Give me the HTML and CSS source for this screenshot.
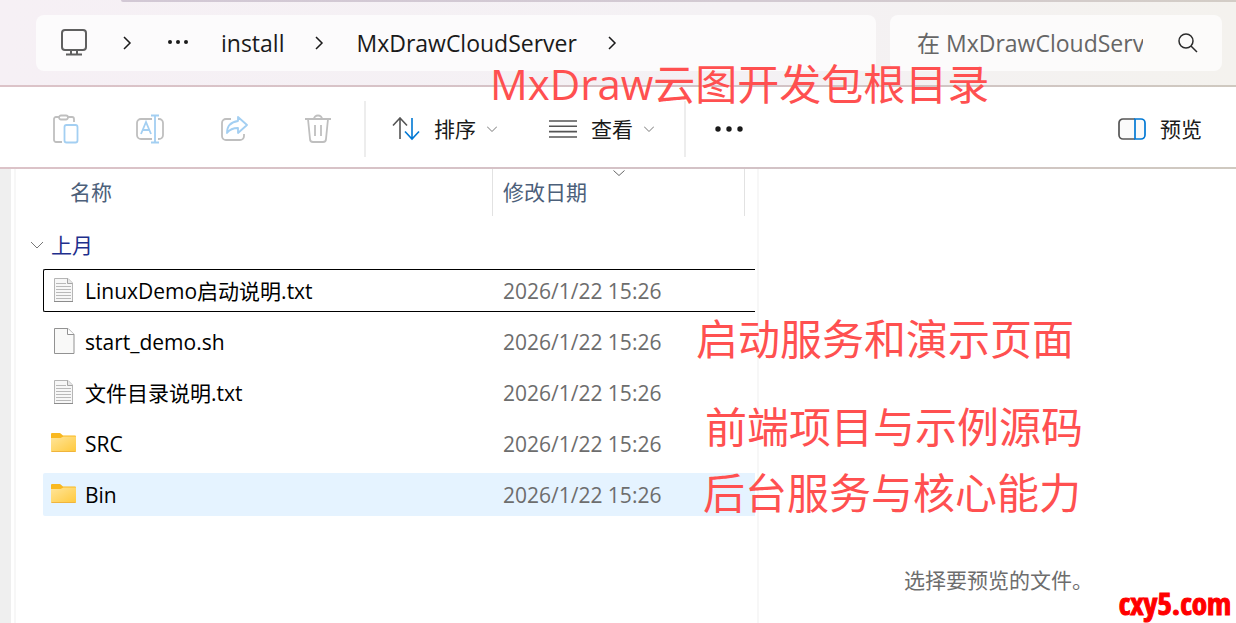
FILE: index.html
```html
<!DOCTYPE html>
<html lang="zh-CN">
<head>
    <meta charset="utf-8">
    <title>MxDrawCloudServer</title>
    <link rel="stylesheet" href="styles.css">
</head>
<body>

    <header class="address-bar">
        <div class="tab-line"></div>
        <nav class="path">
            <button class="pc" aria-label="此电脑">
                <svg width="28" height="28" viewBox="0 0 28 28" fill="none" stroke="#5f5f5f" stroke-width="2">
                    <rect x="2" y="1" width="24" height="20" rx="3"/>
                    <path d="M11 21v4M17 21v4M6 25.500h16"/>
                </svg>
            </button>
            <svg class="sep" width="10" height="16" viewBox="0 0 10 16"><path d="M2 2l6 6-6 6"/></svg>
            <button class="more-path" aria-label="更多">
                <svg width="20" height="8" viewBox="0 0 20 8" fill="#1a1a1a">
                    <circle cx="2" cy="3" r="2"/><circle cx="10" cy="3" r="2"/><circle cx="18" cy="3" r="2"/>
                </svg>
            </button>
            <a class="crumb" href="#">install</a>
            <svg class="sep" width="10" height="16" viewBox="0 0 10 16"><path d="M2 2l6 6-6 6"/></svg>
            <a class="crumb last" href="#">MxDrawCloudServer</a>
            <svg class="sep" width="10" height="16" viewBox="0 0 10 16"><path d="M2 2l6 6-6 6"/></svg>
        </nav>
        <div class="search">
            <input type="text" aria-label="搜索" placeholder="在 MxDrawCloudServer 中搜索">
            <button aria-label="搜索">
                <svg width="20" height="20" viewBox="0 0 20 20" fill="none" stroke="#2b2b2b" stroke-width="1.5">
                    <circle cx="8" cy="8" r="7"/><path d="M13 13l6 6"/>
                </svg>
            </button>
        </div>
    </header>

    <div class="toolbar">
        <div class="tools">
            <button aria-label="粘贴" disabled>
                <svg width="28" height="30" viewBox="0 0 28 30" fill="none" stroke="#bfbfbf" stroke-width="1.8">
                    <path d="M10 28H4a2 2 0 0 1-2-2V5a2 2 0 0 1 2-2h3M16 3h4a2 2 0 0 1 2 2v3"/>
                    <rect x="7" y="1.500" width="9" height="4" rx="2"/>
                    <rect class="blue" x="12.500" y="11" width="13" height="17.500" rx="2"/>
                </svg>
            </button>
            <button aria-label="重命名" disabled>
                <svg width="28" height="30" viewBox="0 0 28 30" fill="none" stroke="#bfbfbf" stroke-width="1.8">
                    <path d="M16 25H5a4 4 0 0 1-4-4V9a4 4 0 0 1 4-4h11M22 5h1a4 4 0 0 1 4 4v12a4 4 0 0 1-4 4h-1"/>
                    <path class="blue" d="M5 20l5-12 5 12M7 16h6M19 2v26M15 1.500h8M15 28.500h8"/>
                </svg>
            </button>
            <button aria-label="共享" disabled>
                <svg width="28" height="30" viewBox="0 0 28 30" fill="none" stroke="#bfbfbf" stroke-width="1.8" stroke-linejoin="round">
                    <path d="M11 5H6a4 4 0 0 0-4 4v13a4 4 0 0 0 4 4h14a4 4 0 0 0 4-4v-2"/>
                    <path class="blue" d="M18 3l9 8-9 8v-5c-5 0-8 1-11 5 0-7 4-11 11-12z"/>
                </svg>
            </button>
            <button aria-label="删除" disabled>
                <svg width="28" height="30" viewBox="0 0 28 30" fill="none" stroke="#bfbfbf" stroke-width="1.8">
                    <path d="M1 5h26M10 5a4 3.500 0 0 1 8 0M4 5l2 20a3 3 0 0 0 3 3h10a3 3 0 0 0 3-3l2-20M11 11v11M17 11v11"/>
                </svg>
            </button>
        </div>
        <div class="menus">
            <button>
                <svg width="28" height="24" viewBox="0 0 28 24" fill="none" stroke="#555" stroke-width="1.6">
                    <path d="M8 22V1M1 8.500L8 1l7 7.500"/>
                    <path stroke="#0078d4" d="M20 1v21M13 14.500l7 7.500 7-7.500"/>
                </svg>
                排序
                <svg class="down" width="10" height="6" viewBox="0 0 10 6"><path d="M0 .5l5 5 5-5"/></svg>
            </button>
            <button>
                <svg width="28" height="20" viewBox="0 0 28 20" stroke="#555" stroke-width="1.6">
                    <path d="M0 2h28M0 7.300h28M0 12.600h28M0 18h28"/>
                </svg>
                查看
                <svg class="down" width="10" height="6" viewBox="0 0 10 6"><path d="M0 .5l5 5 5-5"/></svg>
            </button>
        </div>
        <button class="overflow" aria-label="查看更多">
            <svg width="28" height="6" viewBox="0 0 28 6" fill="#1a1a1a">
                <circle cx="3" cy="3" r="2.700"/><circle cx="14" cy="3" r="2.700"/><circle cx="25" cy="3" r="2.700"/>
            </svg>
        </button>
        <button class="preview-toggle">
            <svg width="28" height="22" viewBox="0 0 28 22" fill="#fafafa" stroke-width="1.7">
                <path stroke="#555" d="M17 1H5a4 4 0 0 0-4 4v12a4 4 0 0 0 4 4h12"/>
                <path stroke="#0078d4" d="M17 1h6a4 4 0 0 1 4 4v12a4 4 0 0 1-4 4h-6z"/>
            </svg>
            预览
        </button>
    </div>

    <main class="content">
        <div class="nav-edge"></div>
        <section class="list">
            <table>
                <colgroup>
                    <col class="col-gutter"><col><col class="col-date"><col class="col-end">
                </colgroup>
                <thead>
                    <tr>
                        <th colspan="2" class="th-name">名称</th>
                        <th class="th-date">修改日期
                            <svg class="sorted" width="12" height="6" viewBox="0 0 12 6"><path d="M.5 .5L6 5.500l5.500-5"/></svg>
                        </th>
                        <th></th>
                    </tr>
                </thead>
                <tbody>
                    <tr class="group">
                        <td colspan="4">
                            <button>
                                <svg width="14" height="8" viewBox="0 0 14 8"><path d="M1 1l6 6 6-6"/></svg>
                                上月
                            </button>
                        </td>
                    </tr>
                    <tr class="focused">
                        <td class="gutter"></td>
                        <td class="name"><div>
                            <svg width="26" height="28" viewBox="0 0 26 28"><use href="#text-file"/></svg>
                            LinuxDemo启动说明.txt</div></td>
                        <td class="date">2026/1/22 15:26</td>
                        <td></td>
                    </tr>
                    <tr>
                        <td class="gutter"></td>
                        <td class="name"><div>
                            <svg width="26" height="28" viewBox="0 0 26 28"><use href="#blank-file"/></svg>
                            start_demo.sh</div></td>
                        <td class="date">2026/1/22 15:26</td>
                        <td></td>
                    </tr>
                    <tr>
                        <td class="gutter"></td>
                        <td class="name"><div>
                            <svg width="26" height="28" viewBox="0 0 26 28"><use href="#text-file"/></svg>
                            文件目录说明.txt</div></td>
                        <td class="date">2026/1/22 15:26</td>
                        <td></td>
                    </tr>
                    <tr>
                        <td class="gutter"></td>
                        <td class="name"><div>
                            <svg width="26" height="28" viewBox="0 0 26 28"><use href="#folder"/></svg>
                            SRC</div></td>
                        <td class="date">2026/1/22 15:26</td>
                        <td></td>
                    </tr>
                    <tr class="hover">
                        <td class="gutter"></td>
                        <td class="name"><div>
                            <svg width="26" height="28" viewBox="0 0 26 28"><use href="#folder"/></svg>
                            Bin</div></td>
                        <td class="date">2026/1/22 15:26</td>
                        <td></td>
                    </tr>
                </tbody>
            </table>
        </section>
        <aside class="preview">
            <p>选择要预览的文件。</p>
        </aside>
    </main>

    <!-- red notes over the window -->
    <p class="note note-root">MxDraw云图开发包根目录</p>
    <p class="note note-start">启动服务和演示页面</p>
    <p class="note note-src">前端项目与示例源码</p>
    <p class="note note-bin">后台服务与核心能力</p>
    <p class="watermark">cxy5.com</p>

    <!-- file icons -->
    <svg class="defs" width="0" height="0">
        <defs>
            <linearGradient id="folder-fill" x1="0" y1="0" x2="1" y2="1">
                <stop offset="0" stop-color="#ffe59a"/>
                <stop offset="1" stop-color="#ffc93c"/>
            </linearGradient>
            <symbol id="text-file" viewBox="0 0 26 28">
                <path d="M3.500 1.500h13.500l4.500 4.500v18.500h-18z" fill="#f7f7f7" stroke="#b5b5b5"/>
                <path d="M3 24.500h19" stroke="#8c8c8c"/>
                <path d="M16.500 1.500v5h5" fill="#e8e8e8" stroke="#a5a5a5"/>
                <path d="M5 6.500h10M5 9.500h15M5 12.500h15M5 15.500h15M5 18.500h15M5 21.500h15" stroke="#b9b9b9"/>
            </symbol>
            <symbol id="blank-file" viewBox="0 0 26 28">
                <path d="M3.500 .5h13.500l6 6v19h-19.500z" fill="#f9f9f8" stroke="#929292"/>
                <path d="M16.500 .5v6h6.500" fill="#fff" stroke="#929292"/>
            </symbol>
            <symbol id="folder" viewBox="0 0 26 28">
                <path d="M0 4a1 1 0 0 1 1-1h8l3 2.500h12a1 1 0 0 1 1 1v5H0z" fill="#f9b81f"/>
                <path d="M0 8h9.500l3-1.500H25V21a1 1 0 0 1-1 1H1a1 1 0 0 1-1-1z" fill="url(#folder-fill)"/>
                <path d="M.5 21.500h24" stroke="#f0b43c"/>
            </symbol>
        </defs>
    </svg>

</body>
</html>
```
FILE: styles.css
```css
* {
    box-sizing: border-box;
}

body {
    margin: 0;
    min-height: 100vh;
    display: flex;
    flex-direction: column;
    position: relative;
    overflow: hidden;
    background: #fff;
    color: #1a1a1a;
    font-family: "Open Sans", "Noto Sans CJK SC", sans-serif;
    font-size: 21px;
    line-height: 28px;
}

button {
    display: flex;
    align-items: center;
    padding: 0;
    border: 0;
    background: none;
    color: inherit;
    font: inherit;
}

p {
    margin: 0;
}

svg {
    flex: none;
}

/* address bar */
.address-bar {
    position: relative;
    display: flex;
    gap: 14px;
    height: 87px;
    padding: 15px 14px 14px 36px;
    border-bottom: 2px solid;
    border-image: linear-gradient(90deg, #dcc3c8, #d3c2c6 60%, #cfc9c0) 1;
    background: linear-gradient(90deg, #f6f0f5, #f4f1f4 60%, #f4f2ee);
}

.tab-line {
    position: absolute;
    top: 0;
    left: 121px;
    right: 0;
    height: 2px;
    border-radius: 0 0 0 2px;
    background: linear-gradient(90deg, #d2c8d5, #d3cad2 60%, #d3cdc6);
}

.path,
.search {
    display: flex;
    align-items: center;
    height: 56px;
    border-radius: 8px;
    background: rgba(255, 255, 255, 0.7);
}

.path {
    flex: 1;
    padding-left: 24px;
}

.sep {
    fill: none;
    stroke: #1a1a1a;
    stroke-width: 1.5;
}

.pc {
    margin-right: 34px;
}

.more-path {
    margin: 0 33px 0 36px;
}

.crumb {
    margin-right: 30px;
    color: #1a1a1a;
    font-size: 23px;
    text-decoration: none;
}

.last {
    margin-left: 32px;
}

.search {
    width: 332px;
    padding: 0 24px 0 27px;
}

.search input {
    flex: 1;
    min-width: 0;
    margin-right: 35px;
    padding: 0;
    border: 0;
    outline: 0;
    background: none;
    font: inherit;
    font-size: 23px;
}

.search input::placeholder {
    color: #666;
    opacity: 1;
}

/* toolbar */
.toolbar {
    display: flex;
    align-items: center;
    height: 82px;
    padding: 4px 34px 0 0;
    border-bottom: 2px solid;
    border-image: linear-gradient(90deg, #dcc3c8, #d3c2c6 60%, #cfc9c0) 1;
}

.tools,
.menus {
    display: flex;
    align-items: center;
    height: 56px;
    border-right: 2px solid #ededed;
}

.tools {
    gap: 56px;
    padding: 0 32px 0 52px;
}

.blue {
    stroke: #a3cff2;
}

.menus {
    gap: 52px;
    padding: 0 30px 0 26px;
}

.menus button,
.preview-toggle {
    gap: 14px;
}

.down {
    fill: none;
    stroke: #777;
}

.menus .down {
    margin-left: -3px;
}

.overflow {
    margin-left: 29px;
}

.preview-toggle {
    margin-left: auto;
}

/* file list and preview */
.content {
    flex: 1;
    display: flex;
}

.nav-edge {
    width: 16px;
    border-left: 11px solid #efefef;
    border-right: 2px solid #f7f7f7;
}

.list {
    flex: 14;
    padding-right: 2px;
    border-right: 2px solid #f7f7f7;
    overflow: hidden;
}

table {
    width: 100%;
    margin-top: -8px;
    border-spacing: 0 8px;
    table-layout: fixed;
}

th,
td {
    padding: 0;
    text-align: left;
    font-weight: 400;
}

.col-gutter {
    width: 27px;
}

.col-date {
    width: 253px;
}

.col-end {
    width: 10px;
}

th {
    height: 47px;
    padding-bottom: 2px;
    color: #4c607a;
}

.th-name {
    padding-left: 54px;
}

.th-date {
    position: relative;
    padding-left: 10px;
    border: 1px solid #e2e2e2;
    border-width: 0 1px;
}

.sorted {
    position: absolute;
    top: 1px;
    left: 120px;
    fill: none;
    stroke: #666;
}

.group td {
    height: 37px;
    padding: 4px 0 0 14px;
    color: #1e2f8c;
}

.group button {
    gap: 7px;
}

.group svg {
    fill: none;
    stroke: #777;
}

.name,
.date {
    height: 43px;
}

.name div {
    display: flex;
    align-items: center;
    gap: 8px;
    padding-left: 8px;
    color: #000;
}

.date {
    padding-left: 11px;
    color: #6d6d6d;
}

.focused td:not(.gutter) {
    border: 0 solid #000;
    border-width: 1px 0;
}

.focused td.name:not(.gutter) {
    border-left-width: 1px;
    border-radius: 2px 0 0 2px;
}

.focused .name div {
    padding-left: 7px;
}

.hover td:not(.gutter) {
    background: #e5f3ff;
}

.hover .name {
    border-radius: 2px 0 0 2px;
}

.preview {
    flex: 9;
    padding: 397px 0 0 2px;
    color: #6d6d6d;
    text-align: center;
}

/* notes */
.note {
    position: absolute;
    color: #ff5050;
    font-size: 42px;
    line-height: 56px;
    white-space: nowrap;
}

.note-root {
    top: 56px;
    left: 490px;
}

.note-start {
    top: 311px;
    left: 696px;
}

.note-src {
    top: 399px;
    left: 705px;
}

.note-bin {
    top: 465px;
    left: 703px;
}

.watermark {
    position: absolute;
    right: 5px;
    bottom: 4px;
    color: #f00;
    font-family: Impact, "Liberation Sans Narrow", "Open Sans Condensed", sans-serif;
    font-size: 31px;
    font-weight: 700;
    line-height: 32px;
    -webkit-text-stroke: 1px #f00;
}

.defs {
    position: absolute;
}
```
